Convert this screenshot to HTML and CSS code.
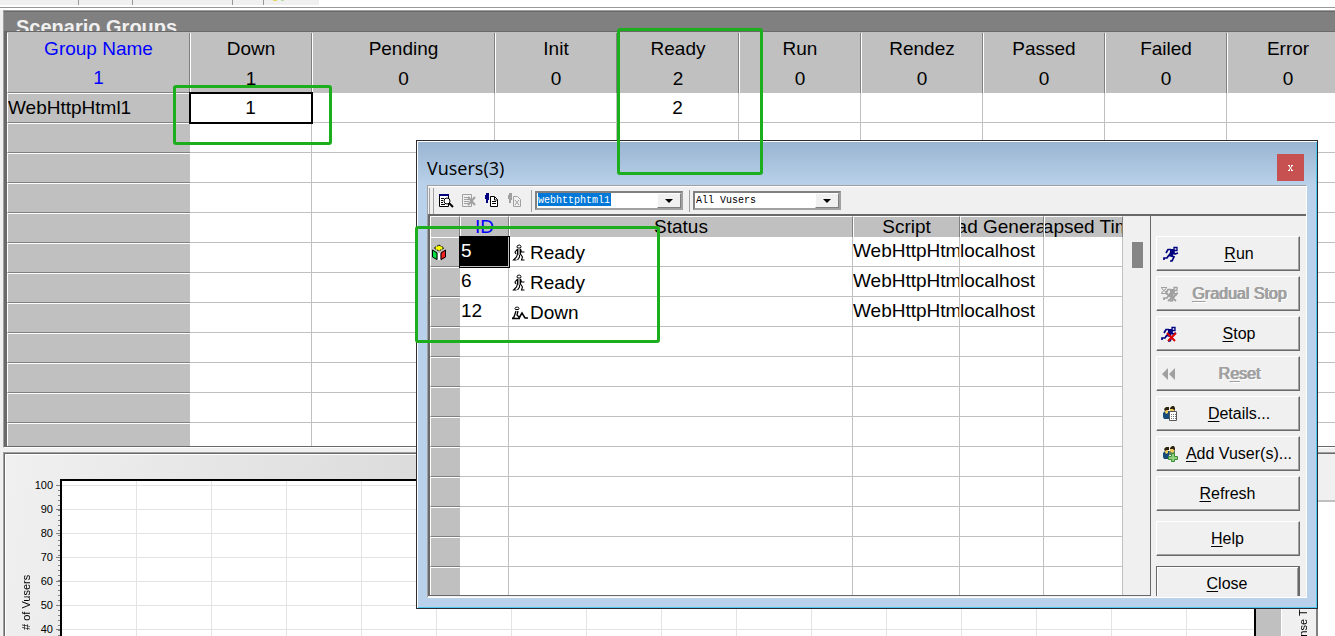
FILE: index.html
```html
<!DOCTYPE html>
<html lang="en">
<head>
<meta charset="UTF-8" />
<title>Scenario Groups</title>
<link rel="stylesheet" href="styles.css">
</head>
<body>

<svg class="sprites" aria-hidden="true">
  <symbol id="walk" viewBox="0 0 14 17">
    <path d="M5.500 1.500q2-1 3 0t0 2.500h-3q-1-1 0-2.500z" fill="#fff" stroke="#000"/>
    <path d="M5 5h4v6H5z" fill="#999"/>
    <path d="M5.500 5L3 8l1 2M8.500 5l1 3h3M5.500 5v5M8.500 5v5l2 3-1 3h3M5.500 10l-1 3-3 3h3M7.500 11v2l-2 3" fill="none" stroke="#000" stroke-width="1.1"/>
  </symbol>
  <symbol id="sit" viewBox="0 0 16 14">
    <path d="M3.500 1.500q2-1 3 0t0 2h-3q-1-1 0-2z" fill="#fff" stroke="#000"/>
    <path d="M4 5l-1 3-1 3-2 1.500h8M6 5l-1 4 3 3" fill="none" stroke="#000" stroke-width="1.3"/>
    <path d="M7 12l3-5 3 5h3" fill="none" stroke="#000" stroke-width="1.5"/>
  </symbol>
  <symbol id="runner" viewBox="0 0 16 16">
    <path d="M11 1.500h3v3h-3z" fill="none" stroke="currentColor" stroke-width="1.3"/>
    <path d="M7 3h4l1 3-3 5-4-1 2-4z" fill="currentColor"/>
    <path d="M8 3.500H5L3 7M10 6l2 2 3-1M6 9l-2 3H1v2M7 9l4 2-2 4H7" fill="none" stroke="currentColor" stroke-width="1.7"/>
  </symbol>
  <symbol id="people" viewBox="0 0 16 16">
    <path d="M1 7l2-2h4v8H2L1 11z" fill="#164a78"/>
    <path d="M7 5h6v4H7z" fill="#5d7f5c"/>
    <path d="M3 3h3v4l-2 1-1-2zM8 2h4v4l-2 1-2-2z" fill="#edc95c"/>
    <path d="M2 3l2-2h3v3H5L3 5zM8 2l2-2h2l1 2v3l-2-2H8z" fill="#2e2410"/>
  </symbol>
</svg>

<div class="top-toolbar">
  <i class="cut-a"></i><i class="cut-b"></i><i class="cut-c"></i><i class="cut-d"></i><i class="cut-e"></i>
</div>

<!-- Scenario groups -->
<section class="groups">
  <h2>Scenario Groups</h2>
  <div class="groups-body">
    <table class="groups-table">
      <colgroup>
        <col class="wide"><col><col class="wide"><col><col><col><col><col><col><col>
      </colgroup>
      <thead>
        <tr><th>Group Name</th><th>Down</th><th>Pending</th><th>Init</th><th>Ready</th><th>Run</th><th>Rendez</th><th>Passed</th><th>Failed</th><th>Error</th></tr>
        <tr><th>1</th><th>1</th><th>0</th><th>0</th><th>2</th><th>0</th><th>0</th><th>0</th><th>0</th><th>0</th></tr>
      </thead>
      <tbody>
        <tr><th>WebHttpHtml1</th><td class="current">1</td><td></td><td></td><td>2</td><td></td><td></td><td></td><td></td><td></td></tr>
        <tr><th></th><td></td><td></td><td></td><td></td><td></td><td></td><td></td><td></td><td></td></tr>
        <tr><th></th><td></td><td></td><td></td><td></td><td></td><td></td><td></td><td></td><td></td></tr>
        <tr><th></th><td></td><td></td><td></td><td></td><td></td><td></td><td></td><td></td><td></td></tr>
        <tr><th></th><td></td><td></td><td></td><td></td><td></td><td></td><td></td><td></td><td></td></tr>
        <tr><th></th><td></td><td></td><td></td><td></td><td></td><td></td><td></td><td></td><td></td></tr>
        <tr><th></th><td></td><td></td><td></td><td></td><td></td><td></td><td></td><td></td><td></td></tr>
        <tr><th></th><td></td><td></td><td></td><td></td><td></td><td></td><td></td><td></td><td></td></tr>
        <tr><th></th><td></td><td></td><td></td><td></td><td></td><td></td><td></td><td></td><td></td></tr>
        <tr><th></th><td></td><td></td><td></td><td></td><td></td><td></td><td></td><td></td><td></td></tr>
        <tr><th></th><td></td><td></td><td></td><td></td><td></td><td></td><td></td><td></td><td></td></tr>
        <tr><th></th><td></td><td></td><td></td><td></td><td></td><td></td><td></td><td></td><td></td></tr>
      </tbody>
    </table>
  </div>
</section>

<!-- Graphs -->
<section class="charts">
  <div class="chart">
    <div class="axis-title"># of Vusers</div>
    <div class="axis">
      <span>100</span><span>90</span><span>80</span><span>70</span><span>60</span><span>50</span><span>40</span>
    </div>
    <div class="ticks"></div>
    <div class="plot"></div>
  </div>
  <div class="chart-next">
    <div class="axis-title">Response Time</div>
    <div class="plot-next"></div>
  </div>
</section>

<!-- Vusers window -->
<div class="dialog" role="dialog" aria-labelledby="dialogTitle">
  <div class="dialog-title">
    <span id="dialogTitle">Vusers(3)</span>
    <button type="button" class="close-x" aria-label="Close window"><svg width="5" height="6" viewBox="0 0 5 6"><path d="M0 .5h2M3 .5h2M1 1l3 4M4 1L1 5M0 5.500h2M3 5.500h2" stroke="#fff"/></svg></button>
  </div>
  <div class="client">
    <div class="tools">
      <i class="grip"></i>
      <button type="button" class="tool" aria-label="View details">
        <svg width="16" height="16" viewBox="0 0 16 16"><path d="M1.500 1.500h9v12h-9z" fill="#fff" stroke="#000"/><path d="M1 1h10v2H1z" fill="#00007f"/><path d="M3 5.500h3M3 7.500h2M3 9.500h2M3 11.500h4" stroke="#000"/><circle cx="9" cy="8" r="3" fill="#fff" stroke="#000"/><path d="M11 10l4 4" stroke="#000" stroke-width="2"/></svg>
      </button>
      <button type="button" class="tool" disabled aria-label="Hide details">
        <svg width="16" height="16" viewBox="0 0 16 16"><path d="M1.500 1.500h9v12h-9z" fill="none" stroke="#a0a0a0"/><path d="M3 4.500h6M3 6.500h5M3 8.500h5M3 10.500h5" stroke="#a0a0a0"/><path d="M7 4l7 8M14 4l-7 8" stroke="#a0a0a0" stroke-width="2"/></svg>
      </button>
      <button type="button" class="tool" aria-label="Show log">
        <svg width="16" height="16" viewBox="0 0 16 16"><path d="M2 0h3v2H2zM1 2h4v5H4v3H2V6H1z" fill="#00007f"/><path d="M6.500 3.500h4l3 3v7h-7z" fill="#fff" stroke="#000"/><path d="M10.500 4v3H13M8 8.500h4M8 10.500h4" fill="none" stroke="#000"/></svg>
      </button>
      <button type="button" class="tool" disabled aria-label="Hide log">
        <svg width="16" height="16" viewBox="0 0 16 16"><path d="M2 0h3v2H2zM1 2h4v5H4v3H2V6H1z" fill="#a0a0a0"/><path d="M6.500 3.500h4l3 3v7h-7z" fill="none" stroke="#a0a0a0"/><path d="M8 7l4 5M12 7l-4 5" stroke="#a0a0a0"/></svg>
      </button>
      <i class="sep"></i>
      <div class="combo picked">
        <select aria-label="Group"><option>webhttphtml1</option></select>
        <span class="arrow"></span>
      </div>
      <i class="sep"></i>
      <div class="combo">
        <select aria-label="Status filter"><option>All Vusers</option></select>
        <span class="arrow"></span>
      </div>
    </div>

    <div class="main">
      <div class="grid">
        <table class="vusers">
          <colgroup>
            <col class="c-mark"><col class="c-id"><col><col class="c-script"><col class="c-load"><col class="c-time">
          </colgroup>
          <thead>
            <tr><th></th><th class="sorted"><div>ID</div></th><th><div>Status</div></th><th><div>Script</div></th><th><div>Load Generator</div></th><th><div>Elapsed Time</div></th></tr>
          </thead>
          <tbody>
            <tr>
              <th><svg width="16" height="17" viewBox="0 0 16 17"><path d="M8 1l5 3-5 3-5-3z" fill="#ff0"/><path d="M1 6l5 2v8l-5-3z" fill="#00e040"/><path d="M15 6l-5 2v8l5-3z" fill="#f02020"/><path d="M8 1l5 3-5 3-5-3z" fill="none" stroke="#000" stroke-dasharray="2 1"/><path d="M1.500 6v7L6 15.500V9zM14.500 6v7L10 15.500V9z" fill="none" stroke="#000"/><path d="M8 9v7" stroke="#fff" stroke-width="2"/></svg></th>
              <td class="id current">5</td>
              <td class="status"><div><svg width="14" height="17"><use href="#walk"/></svg>Ready</div></td>
              <td>WebHttpHtml1</td><td>localhost</td><td></td>
            </tr>
            <tr>
              <th></th><td class="id">6</td>
              <td class="status"><div><svg width="14" height="17"><use href="#walk"/></svg>Ready</div></td>
              <td>WebHttpHtml1</td><td>localhost</td><td></td>
            </tr>
            <tr>
              <th></th><td class="id">12</td>
              <td class="status"><div><svg width="16" height="14"><use href="#sit"/></svg>Down</div></td>
              <td>WebHttpHtml1</td><td>localhost</td><td></td>
            </tr>
            <tr><th></th><td></td><td></td><td></td><td></td><td></td></tr>
            <tr><th></th><td></td><td></td><td></td><td></td><td></td></tr>
            <tr><th></th><td></td><td></td><td></td><td></td><td></td></tr>
            <tr><th></th><td></td><td></td><td></td><td></td><td></td></tr>
            <tr><th></th><td></td><td></td><td></td><td></td><td></td></tr>
            <tr><th></th><td></td><td></td><td></td><td></td><td></td></tr>
            <tr><th></th><td></td><td></td><td></td><td></td><td></td></tr>
            <tr><th></th><td></td><td></td><td></td><td></td><td></td></tr>
            <tr><th></th><td></td><td></td><td></td><td></td><td></td></tr>
          </tbody>
        </table>
        <div class="scroll"><i></i></div>
      </div>

      <div class="actions">
        <button type="button"><svg class="navy" width="18" height="16" viewBox="0 0 18 16"><use href="#runner" x="2" width="16" height="16"/></svg><span><u>R</u>un</span></button>
        <button type="button" disabled><svg width="18" height="16" viewBox="0 0 18 16"><path d="M0 1.500h6M0 7.500h6M1 2v1l4 3v1M5 2v1L1 6v1" fill="none" stroke="#a0a0a0"/><use href="#runner" x="2" width="16" height="16"/><path d="M5 7l10 8M16 8l-9 7" stroke="#a0a0a0" stroke-width="2"/></svg><span><u>G</u>radual Stop</span></button>
        <button type="button"><svg class="navy" width="18" height="16" viewBox="0 0 18 16"><use href="#runner" width="16" height="16"/><path d="M6 7l8 8M15 7l-8 8" stroke="#e00000" stroke-width="2"/></svg><span><u>S</u>top</span></button>
        <button type="button" disabled><svg width="18" height="16" viewBox="0 0 18 16"><path d="M7 2v12L1 8zM14 2v12L8 8z" fill="#a0a0a0"/></svg><span>R<u>e</u>set</span></button>
        <button type="button"><svg width="18" height="16" viewBox="0 0 18 16"><use href="#people" x="1" width="16" height="16"/><path d="M8.500 5.500h7v9h-7z" fill="#fff" stroke="#555"/><path d="M10 8.500h5M10 10.500h5M10 12.500h5" stroke="#777" stroke-dasharray="1 1"/></svg><span><u>D</u>etails...</span></button>
        <button type="button"><svg width="18" height="16" viewBox="0 0 18 16"><use href="#people" x="1" width="16" height="16"/><path d="M10.500 7.500h3v3h3v3h-3v2h-3v-2h-3v-3h3z" fill="#8fd07c" stroke="#3d8a39"/></svg><span><u>A</u>dd Vuser(s)...</span></button>
        <button type="button"><span><u>R</u>efresh</span></button>
        <button type="button" class="spaced"><span><u>H</u>elp</span></button>
        <button type="button" class="spaced default"><span><u>C</u>lose</span></button>
      </div>
    </div>
  </div>
</div>

<!-- Highlight boxes -->
<div class="mark mark-down"></div>
<div class="mark mark-ready"></div>
<div class="mark mark-vusers"></div>

</body>
</html>
```
FILE: styles.css
```css
* {
  box-sizing: border-box;
}
body {
  margin: 0;
  height: 100vh;
  overflow: hidden;
  position: relative;
  display: flex;
  flex-direction: column;
  background: #f0f0f0;
  font-family: "Liberation Sans", Arial, sans-serif;
  font-size: 19px;
  color: #000;
}
table {
  border-collapse: separate;
  border-spacing: 0;
  table-layout: fixed;
}
th, td {
  padding: 0;
  font-weight: normal;
  overflow: hidden;
  white-space: nowrap;
}
.sprites {
  position: absolute;
  width: 0;
  height: 0;
}

/* bottom edge of the main toolbar */
.top-toolbar {
  flex: none;
  display: flex;
  height: 10px;
  background: linear-gradient(#fff 2px, #999 2px, #999 3px, #fff 3px) 0 5px / 100% 5px no-repeat, linear-gradient(to right, #f0f0f0 319px, #fff 319px);
}
.top-toolbar i {
  height: 5px;
  border-right: 1px solid #999;
}
.cut-a { width: 79px; }
.cut-b { width: 54px; }
.cut-c { width: 100px; }
.cut-d { width: 31px; }
.top-toolbar .cut-e {
  width: 30px;
  height: 1px;
  border-right: 0;
  background: linear-gradient(to right, transparent 9px, #e0d860 9px, #e0d860 13px, transparent 13px, transparent 17px, #b8dca8 17px, #b8dca8 20px, transparent 20px);
}

/* scenario groups */
.groups {
  flex: none;
  display: flex;
  flex-direction: column;
  height: 438px;
  margin-left: 3px;
  border-top: 1px solid #a0a0a0;
  border-left: 1px solid #a0a0a0;
  border-bottom: 1px solid #fff;
}
.groups h2 {
  flex: none;
  height: 21px;
  margin: 0;
  padding: 3px 0 0 12px;
  overflow: hidden;
  border-top: 1px solid #696969;
  border-bottom: 1px solid #696969;
  background: #808080;
  color: #f0f0f0;
  font-size: 20px;
  line-height: 24px;
}
.groups-body {
  flex: 1;
  overflow: hidden;
  padding-top: 1px;
  border-left: 3px solid #696969;
  border-bottom: 1px solid #696969;
  background: #c0c0c0;
}
.groups-table {
  width: 1342px;
}
.groups-table col {
  width: 122px;
}
.groups-table .wide {
  width: 183px;
}
.groups-table tr {
  height: 30px;
}
.groups-table th, .groups-table td {
  height: 30px;
  text-align: center;
  line-height: 29px;
}
.groups-table thead th {
  background: #c0c0c0;
  border-left: 1px solid #fff;
  border-right: 1px solid #808080;
}
.groups-table thead th:first-child {
  color: #00f;
}
.groups-table thead tr:last-child th:first-child {
  border-bottom: 1px solid #808080;
}
.groups-table tbody th {
  background: #c0c0c0;
  border-top: 1px solid #fff;
  border-left: 1px solid #fff;
  border-bottom: 1px solid #808080;
  text-align: left;
  line-height: 28px;
}
.groups-table td {
  background: #fff;
  border-right: 1px solid #c0c0c0;
  border-bottom: 1px solid #c0c0c0;
}
.groups-table .current {
  outline: 2px solid #000;
  outline-offset: -1px;
}

/* graphs */
.charts {
  flex: 1;
  min-height: 0;
  display: flex;
  margin: 4px 0 0 3px;
  border-top: 1px solid #a0a0a0;
  border-left: 1px solid #a0a0a0;
  font-size: 11px;
}
.chart {
  flex: 1;
  display: flex;
  border: solid #696969;
  border-width: 1px 0 0 1px;
  padding-right: 25px;
  box-shadow: inset 1px 1px #fff;
  background: linear-gradient(100deg, #f0f0f0, #c0c0c0 75%);
}
.axis-title {
  writing-mode: vertical-rl;
  transform: rotate(180deg);
  text-align: right;
  white-space: nowrap;
  line-height: 12px;
}
.chart .axis-title {
  width: 12px;
  margin-left: 15px;
  padding-bottom: 121px;
}
.axis {
  width: 21px;
  padding-top: 19px;
  text-align: right;
}
.axis span {
  display: block;
  height: 24px;
  line-height: 24px;
}
.ticks {
  width: 7px;
  margin-top: 31px;
  background:
    linear-gradient(#808080 1px, transparent 1px) right 0 / 4px 24px repeat-y,
    linear-gradient(#808080 1px, transparent 1px) right 0 / 2px 5px repeat-y;
}
.plot {
  flex: 1;
  margin-top: 25px;
  border: 2px solid #000;
  border-bottom: 0;
  background:
    linear-gradient(#e4e4e4 1px, transparent 1px) 0 4px / 100% 24px,
    linear-gradient(to right, #e4e4e4 1px, transparent 1px) 74px 0 / 75px 100%,
    #fff;
}
.chart-next {
  width: 54px;
  display: flex;
  border-top: 1px solid #696969;
  border-left: 1px solid #fff;
}
.chart-next .axis-title {
  align-self: flex-start;
  flex: none;
  width: 12px;
  margin: 0 7px 0 15px;
  padding-bottom: 138px;
}
.plot-next {
  flex: 1;
  margin-top: 46px;
  border-top: 2px solid #c0c0c0;
  border-left: 2px solid #808080;
  background: #fff;
}

/* vusers window */
.dialog {
  position: absolute;
  top: 140px;
  right: 17px;
  bottom: 27px;
  left: 416px;
  display: flex;
  flex-direction: column;
  padding: 1px 10px 10px;
  border: 1px solid #2b2b33;
  box-shadow: inset 1px 1px #fff, inset -1px -1px #4cc8ee;
  background: linear-gradient(#99b4d1, #b9d1ea 44px);
}
.dialog-title {
  flex: none;
  height: 43px;
  display: flex;
  justify-content: space-between;
  align-items: center;
  padding: 8px 3px 0 0;
  font-family: "Open Sans", "Noto Sans", sans-serif;
  font-size: 18px;
}
.close-x {
  width: 27px;
  height: 27px;
  display: flex;
  align-items: center;
  justify-content: center;
  padding: 0;
  border: 0;
  background: #c75050;
}
.client {
  flex: 1;
  min-height: 0;
  display: flex;
  flex-direction: column;
  border: 1px solid #fff;
  border-top-color: #a0a0a0;
  border-left-color: #a0a0a0;
  background: #f0f0f0;
}
.tools {
  flex: none;
  height: 28px;
  display: flex;
  align-items: center;
  border-top: 1px solid #fff;
}
.grip {
  width: 5px;
  height: 26px;
  margin: 0 4px 0 1px;
  border: solid #a0a0a0;
  border-width: 0 1px;
}
.tool {
  width: 23px;
  height: 23px;
  padding: 0;
  display: flex;
  align-items: center;
  justify-content: flex-start;
  border: 0;
  background: none;
}
.sep {
  width: 1px;
  height: 22px;
  margin: 0 3px 0 1px;
  background: #a0a0a0;
}
.combo + .sep {
  margin-left: 6px;
}
.combo {
  position: relative;
  width: 148px;
  height: 19px;
  border: 2px solid #808080;
  border-right-color: #a0a0a0;
  border-bottom-color: #a0a0a0;
  background: #fff;
}
.combo select {
  appearance: none;
  display: block;
  width: 100%;
  height: 15px;
  padding: 0 0 0 1px;
  border: 0;
  border-radius: 0;
  background: #fff;
  color: #000;
  font: 10px "Liberation Mono", monospace;
}
.picked select {
  color: #fff;
  background: linear-gradient(#0078d7, #0078d7) 1px 0 / 73px 13px no-repeat #fff;
}
.arrow {
  position: absolute;
  top: 0;
  right: 0;
  width: 24px;
  height: 15px;
  display: flex;
  align-items: center;
  justify-content: center;
  border: 1px solid #fff;
  border-right-color: #808080;
  border-bottom-color: #808080;
  background: #f0f0f0;
  pointer-events: none;
}
.arrow::before {
  content: "";
  border: 4px solid transparent;
  border-top-color: #000;
  border-bottom: 0;
}
.main {
  flex: 1;
  min-height: 0;
  display: flex;
  padding-bottom: 1px;
  border-top: 2px solid #696969;
}
.grid {
  flex: 1;
  min-width: 0;
  display: flex;
  align-items: flex-start;
  overflow: hidden;
  border: solid #696969;
  border-width: 0 1px 1px 2px;
}
.vusers {
  flex: 1;
  width: 100%;
}
.c-mark { width: 30px; }
.c-id { width: 49px; }
.c-script { width: 107px; }
.c-load { width: 84px; }
.c-time { width: 79px; }
.vusers thead th {
  height: 21px;
  border-top: 1px solid #fff;
  border-left: 1px solid #fff;
  border-right: 1px solid #808080;
  background: #c0c0c0;
}
.vusers thead div {
  display: flex;
  justify-content: center;
  line-height: 20px;
}
.vusers thead .sorted {
  color: #00f;
}
.vusers tbody th {
  height: 30px;
  border-top: 1px solid #fff;
  border-left: 1px solid #fff;
  border-bottom: 1px solid #808080;
  background: #c0c0c0;
  text-align: left;
}
.vusers tbody svg {
  flex: none;
  vertical-align: middle;
}
.vusers td {
  height: 30px;
  padding-bottom: 2px;
  border-right: 1px solid #c0c0c0;
  border-bottom: 1px solid #c0c0c0;
  background: #fff;
  line-height: 27px;
}
.vusers .id {
  padding-left: 1px;
}
.vusers .current {
  background: #000;
  color: #fff;
  outline: 1px solid #000;
}
.vusers .status {
  padding: 2px 0 0 3px;
}
.status div {
  display: flex;
  align-items: center;
  gap: 4px;
}
.status svg[width="16"] {
  margin-right: -2px;
}
.scroll {
  flex: none;
  width: 27px;
  padding: 26px 0 0 9px;
}
.scroll i {
  display: block;
  width: 11px;
  height: 26px;
  background: #858585;
}
.actions {
  flex: none;
  width: 155px;
  display: flex;
  flex-direction: column;
  gap: 4px;
  padding: 20px 6px 0 5px;
  overflow: hidden;
}
.actions button {
  flex: none;
  height: 35px;
  margin-bottom: 1px;
  display: flex;
  align-items: center;
  padding: 0 5px 0 4px;
  border: 1px solid #fff;
  border-right-color: #696969;
  border-bottom-color: #696969;
  box-shadow: inset -1px -1px #a0a0a0;
  background: #f0f0f0;
  color: #000;
  font: 16px "Liberation Sans", Arial, sans-serif;
}
.actions svg {
  flex: none;
}
.actions span {
  flex: 1;
  text-align: center;
  white-space: nowrap;
}
.actions svg + span {
  margin-left: 5px;
}
.actions u {
  text-underline-offset: 2px;
}
.actions button:disabled {
  color: #a0a0a0;
  text-shadow: 1px 0 #a0a0a0, 1px 0 #a0a0a0, 2px 1px #fff;
}
.actions .navy {
  color: #00007f;
}
.actions .spaced {
  margin-top: 5px;
}
.actions .default {
  border: 1px solid #696969;
  border-right-width: 2px;
  box-shadow: inset 1px 1px #fff, inset -1px 0 #a0a0a0;
}

/* highlight boxes over the windows */
.mark {
  position: absolute;
  border: 3px solid #1cae1c;
  border-radius: 3px;
  pointer-events: none;
}
.mark-down {
  top: 85px;
  left: 173px;
  width: 159px;
  height: 60px;
}
.mark-ready {
  top: 28px;
  left: 617px;
  width: 146px;
  height: 147px;
}
.mark-vusers {
  top: 226px;
  left: 415px;
  width: 245px;
  height: 117px;
}
```
